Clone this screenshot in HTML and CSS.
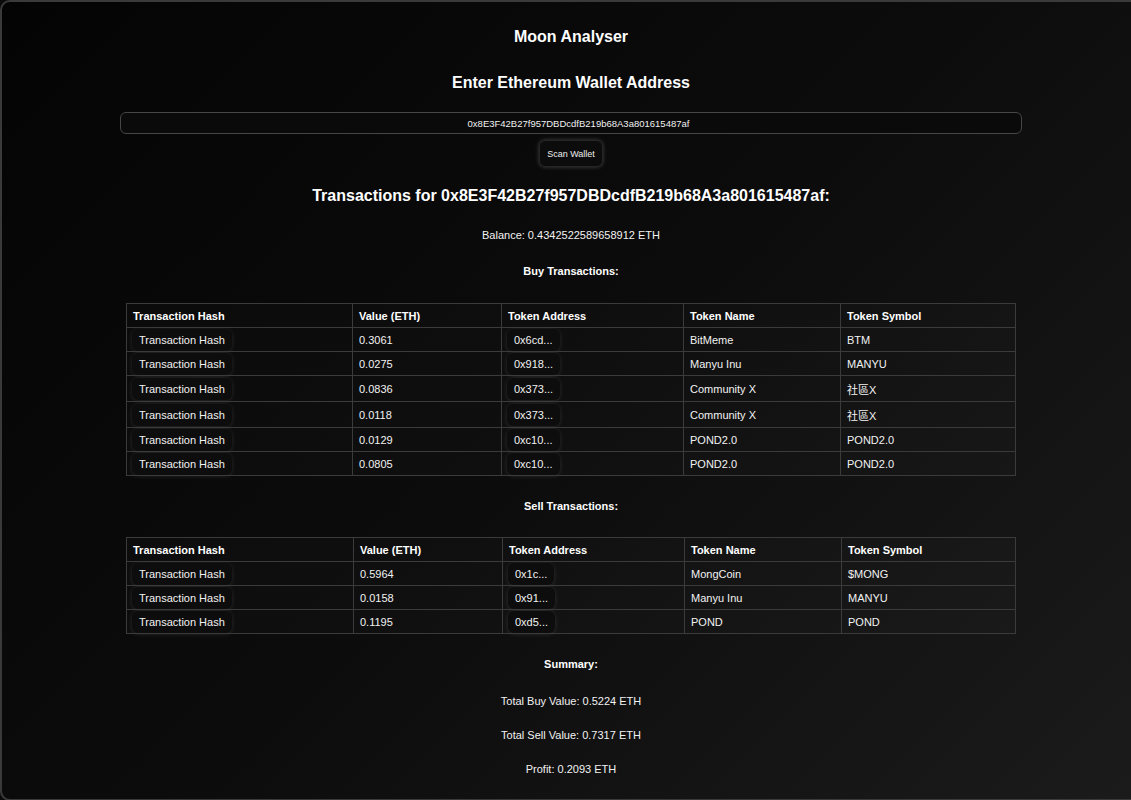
FILE: index.html
```html
<!DOCTYPE html>
<html>
<head>
<meta charset="utf-8">
<title>Moon Analyser</title>
<link rel="stylesheet" href="styles.css">
</head>
<body>
<div class="app">
  <h1 class="title">Moon Analyser</h1>
  <h2 class="subtitle">Enter Ethereum Wallet Address</h2>
  <input class="wallet-input" type="text" value="0x8E3F42B27f957DBDcdfB219b68A3a801615487af">
  <button class="scan-btn">Scan Wallet</button>
  <h2 class="tx-title">Transactions for 0x8E3F42B27f957DBDcdfB219b68A3a801615487af:</h2>
  <p class="balance">Balance: 0.4342522589658912 ETH</p>
  <h3 class="section-title buy-title">Buy Transactions:</h3>
  <table class="tx-table buy-table">
    <colgroup>
      <col class="c1"><col class="c2"><col class="c3"><col class="c4"><col class="c5">
    </colgroup>
    <thead>
      <tr><th>Transaction Hash</th><th>Value (ETH)</th><th>Token Address</th><th>Token Name</th><th>Token Symbol</th></tr>
    </thead>
    <tbody>
      <tr><td><button class="cell-btn">Transaction Hash</button></td><td>0.3061</td><td><button class="cell-btn">0x6cd...</button></td><td>BitMeme</td><td>BTM</td></tr>
      <tr><td><button class="cell-btn">Transaction Hash</button></td><td>0.0275</td><td><button class="cell-btn">0x918...</button></td><td>Manyu Inu</td><td>MANYU</td></tr>
      <tr class="tall"><td><button class="cell-btn">Transaction Hash</button></td><td>0.0836</td><td><button class="cell-btn">0x373...</button></td><td>Community X</td><td class="cjk">社區X</td></tr>
      <tr class="tall"><td><button class="cell-btn">Transaction Hash</button></td><td>0.0118</td><td><button class="cell-btn">0x373...</button></td><td>Community X</td><td class="cjk">社區X</td></tr>
      <tr><td><button class="cell-btn">Transaction Hash</button></td><td>0.0129</td><td><button class="cell-btn">0xc10...</button></td><td>POND2.0</td><td>POND2.0</td></tr>
      <tr><td><button class="cell-btn">Transaction Hash</button></td><td>0.0805</td><td><button class="cell-btn">0xc10...</button></td><td>POND2.0</td><td>POND2.0</td></tr>
    </tbody>
  </table>
  <h3 class="section-title sell-title">Sell Transactions:</h3>
  <table class="tx-table sell-table">
    <colgroup>
      <col class="c1"><col class="c2"><col class="c3"><col class="c4"><col class="c5">
    </colgroup>
    <thead>
      <tr><th>Transaction Hash</th><th>Value (ETH)</th><th>Token Address</th><th>Token Name</th><th>Token Symbol</th></tr>
    </thead>
    <tbody>
      <tr><td><button class="cell-btn">Transaction Hash</button></td><td>0.5964</td><td><button class="cell-btn">0x1c...</button></td><td>MongCoin</td><td>$MONG</td></tr>
      <tr><td><button class="cell-btn">Transaction Hash</button></td><td>0.0158</td><td><button class="cell-btn">0x91...</button></td><td>Manyu Inu</td><td>MANYU</td></tr>
      <tr><td><button class="cell-btn">Transaction Hash</button></td><td>0.1195</td><td><button class="cell-btn">0xd5...</button></td><td>POND</td><td>POND</td></tr>
    </tbody>
  </table>
  <h3 class="section-title summary-title">Summary:</h3>
  <p class="summary-line first">Total Buy Value: 0.5224 ETH</p>
  <p class="summary-line">Total Sell Value: 0.7317 ETH</p>
  <p class="summary-line">Profit: 0.2093 ETH</p>
</div>
</body>
</html>
```
FILE: styles.css
```css
html, body {
  margin: 0;
  padding: 0;
  background: #0b0b0b;
  overflow: hidden;
}
body {
  font-family: "Liberation Sans", Arial, sans-serif;
  color: #f2f2f2;
  font-size: 11px;
}
.app {
  width: 1142px;
  height: 801px;
  box-sizing: border-box;
  border: 2px solid #3a3a3a;
  border-radius: 10px;
  background: linear-gradient(135deg, #040404 0%, #0c0c0c 50%, #1b1b1b 100%);
  display: flex;
  flex-direction: column;
  align-items: center;
  text-align: center;
  overflow: hidden;
}
.title {
  font-size: 16px;
  line-height: 20px;
  font-weight: bold;
  color: #fff;
  margin: 25px 0 0;
}
.subtitle {
  font-size: 16px;
  line-height: 20px;
  font-weight: bold;
  color: #fff;
  margin: 26px 0 0;
}
.wallet-input {
  margin: 19px 0 0;
  width: 902px;
  height: 22px;
  box-sizing: border-box;
  border: 1px solid #464646;
  border-radius: 6px;
  background: #0a0a0a;
  color: #f0f0f0;
  font-family: "Liberation Sans", Arial, sans-serif;
  font-size: 9.5px;
  text-align: center;
  padding: 0 0 0 15px;
  outline: none;
}
.scan-btn {
  margin: 6px 0 0;
  height: 27px;
  padding: 0 7px;
  border: 1px solid #262626;
  border-radius: 6px;
  background: #0c0c0c;
  color: #eee;
  font-family: "Liberation Sans", Arial, sans-serif;
  font-size: 9px;
  box-shadow: 0 0 4px rgba(255, 255, 255, 0.22);
}
.tx-title {
  font-size: 16px;
  line-height: 20px;
  font-weight: bold;
  color: #fff;
  margin: 19px 0 0;
}
.balance {
  margin: 22px 0 0;
  line-height: 14px;
}
.section-title {
  font-size: 11px;
  line-height: 14px;
  font-weight: bold;
  color: #fff;
  margin: 0;
}
.buy-title { margin-top: 22px; }
.sell-title { margin-top: 23px; }
.summary-title { margin-top: 23px; }
.tx-table {
  margin-top: 25px;
  width: 889px;
  border-collapse: collapse;
  table-layout: fixed;
  text-align: left;
  background: rgba(255, 255, 255, 0.015);
}
.sell-table {
  margin-top: 24px;
}
.tx-table .c1 { width: 226px; }
.tx-table .c2 { width: 149px; }
.tx-table .c3 { width: 182px; }
.tx-table .c4 { width: 157px; }
.tx-table .c5 { width: 175px; }
.sell-table .c1 { width: 227px; }
.sell-table .c3 { width: 182px; }
.sell-table .c4 { width: 157px; }
.sell-table .c5 { width: 174px; }
.tx-table th,
.tx-table td {
  border: 1px solid #3b3b3b;
  padding: 0 6px;
  height: 23px;
  font-size: 11px;
  color: #f2f2f2;
  white-space: nowrap;
}
.tx-table th {
  font-weight: bold;
  color: #fff;
}
.tx-table tr.tall td {
  height: 25px;
}
.tx-table td:first-child,
.tx-table td:nth-child(3) {
  padding-left: 5px;
}
.cjk {
  font-family: "Liberation Sans", "Noto Sans CJK TC", sans-serif;
}
.cell-btn {
  display: block;
  height: 22px;
  padding: 0 7px;
  border: none;
  border-radius: 6px;
  background: #0d0d0d;
  color: #f2f2f2;
  font-family: "Liberation Sans", Arial, sans-serif;
  font-size: 11px;
  box-shadow: 0 1px 5px rgba(255, 255, 255, 0.12);
}
.summary-line {
  margin: 20px 0 0;
  line-height: 14px;
}
.summary-line.first {
  margin-top: 23px;
}
```
